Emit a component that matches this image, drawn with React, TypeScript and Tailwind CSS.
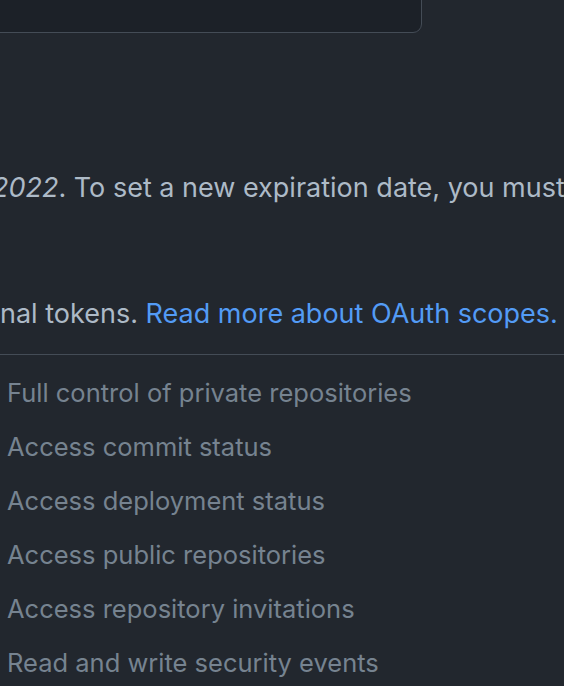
import React from 'react';

const scopes = [
  { name: 'repo', desc: 'Full control of private repositories' },
  { name: 'repo:status', desc: 'Access commit status' },
  { name: 'repo_deployment', desc: 'Access deployment status' },
  { name: 'public_repo', desc: 'Access public repositories' },
  { name: 'repo:invite', desc: 'Access repository invitations' },
  { name: 'security_events', desc: 'Read and write security events' },
];

const App: React.FC = () => {
  return (
    <div className="w-[564px] h-[686px] overflow-hidden bg-[#22272e] text-[#adbac7] font-['Inter',sans-serif] text-[27px]">
      {/* Token input (top cut off) */}
      <div className="w-[442px] h-[60px] mt-[-27px] ml-[-20px] bg-[#1c2128] border border-[#444c56] rounded-[9px]"></div>

      {/* Expiration notice */}
      <p className="mt-[137px] flex whitespace-nowrap leading-[36px]">
        <span className="w-0 flex justify-end">
          This token expires on <em>&nbsp;Sat, Jan 1&nbsp;</em>
        </span>
        <span className="ml-[-8px]">
          <em>2022</em>. To set a new expiration date, you must regenerate the token.
        </span>
      </p>

      {/* Scopes description */}
      <p className="mt-[90px] flex whitespace-nowrap leading-[36px]">
        <span className="w-0 flex justify-end">Scopes define the access for perso</span>
        <span>
          nal tokens. <a className="text-[#539bf5]">Read more about OAuth scopes.</a>
        </span>
      </p>

      <div className="mt-[22px] border-t border-[#444c56]"></div>

      {/* Scope list */}
      <ul className="mt-[11px] text-[25.5px]">
        {scopes.map((s) => (
          <li key={s.name} className="flex items-center h-[54px] whitespace-nowrap">
            <span className="w-0 flex justify-end">
              <span className="mr-[60px] text-[#adbac7] font-semibold">{s.name}</span>
            </span>
            <span className="pl-[7px] text-[#768390]">{s.desc}</span>
          </li>
        ))}
      </ul>
    </div>
  );
};

export default App;
